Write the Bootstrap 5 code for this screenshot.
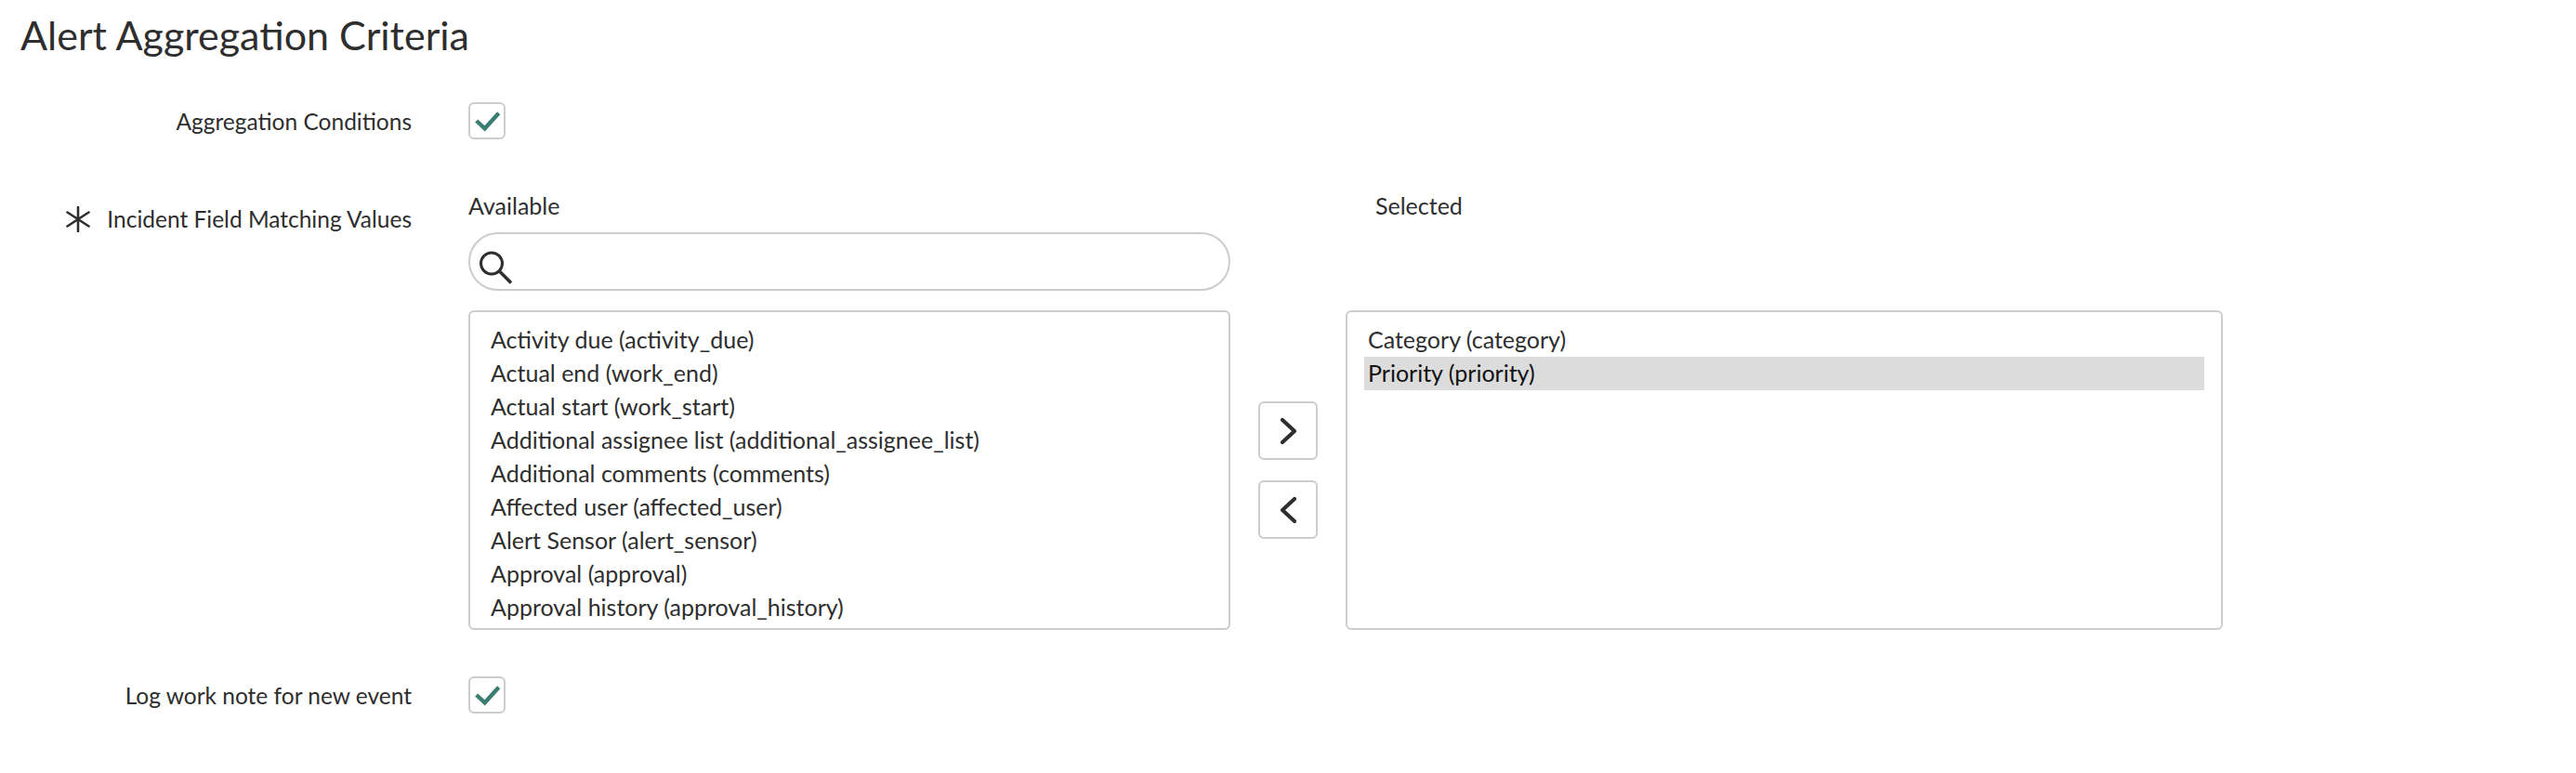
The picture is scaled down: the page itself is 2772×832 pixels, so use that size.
<!DOCTYPE html>
<html lang="en">
<head>
<meta charset="utf-8">
<title>Alert Aggregation Criteria</title>
<link href="https://cdn.jsdelivr.net/npm/bootstrap@5.3.0/dist/css/bootstrap.min.css" rel="stylesheet">
<style>
body { background:#fff; color:#2e2e2e; font-family:"Lato","Noto Sans",sans-serif; font-size:25px; line-height:36px; }
.ttl { font-family:inherit; font-size:43px; font-weight:400; line-height:56px; padding:10px 0 44px 22px; margin:0; color:#2e2e2e; }
.lab-col { width:443px; margin-right:61px; flex:none; font-size:24.500px; }
.lab-one { padding-top:2px; }
.cbx { width:40px; height:40px; border:2px solid #ccc; border-radius:6px; background:#fff; }
.cbx svg { width:36px; height:36px; display:block; }
.row-two { margin-top:54px; }
.lab-two { padding-top:14px; gap:18px; }
.pick-grid { grid-template-columns:820px 124px 944px; }
.slush-label { height:36px; line-height:34px; }
.sel-label { padding-left:32px; }
.srch { height:63px; margin-top:10px; margin-bottom:21px; border:2px solid #ccc; border-radius:32px; padding-left:10px; }
.lbox { height:344px; border:2px solid #ccc; border-radius:6px; padding:12px 18px 0 18px; }
.lbox-item { height:36px; line-height:34px; padding-left:4px; white-space:nowrap; }
.lbox-on { background:#dcdcdc; color:#111; }
.mover-stack { gap:22px; }
.mover { width:64px; height:63px; padding:0; border:2px solid #ccc; border-radius:6px; background:#fff; overflow:hidden; }
.mover svg { width:60px; height:60px; display:block; }
.row-three { margin-top:50px; }
</style>
</head>
<body>
<h1 class="ttl">Alert Aggregation Criteria</h1>

<div class="d-flex align-items-center">
  <div class="lab-col lab-one text-end">Aggregation Conditions</div>
  <div class="cbx"><svg viewBox="0 0 36 36" fill="none"><path d="M6.700 18 15.700 26.300 30.700 9.700" stroke="#3a7d71" stroke-width="4.400"/></svg></div>
</div>

<div class="d-flex row-two">
  <div class="lab-col lab-two d-flex justify-content-end align-items-start">
    <svg width="26" height="28" viewBox="0 0 26 28" class="mt-1 flex-shrink-0" fill="none" stroke="#2e2e2e" stroke-width="2.600" stroke-linecap="round"><path d="M13 1V27M1.500 6.500 24.500 21.500M24.500 6.500 1.500 21.500"/></svg>
    <span>Incident Field Matching Values</span>
  </div>
  <div class="d-grid pick-grid">
    <div>
      <div class="slush-label">Available</div>
      <div class="srch d-flex align-items-center bg-white">
        <svg width="40" height="50" viewBox="0 0 40 50" fill="none" stroke="#2e2e2e" stroke-width="3"><circle cx="13" cy="26.500" r="11.500"/><path d="M22 35.500 34 47.500" stroke-width="3.500"/></svg>
      </div>
    </div>
    <div></div>
    <div class="slush-label sel-label">Selected</div>

    <div class="lbox">
      <div class="lbox-item">Activity due (activity_due)</div>
      <div class="lbox-item">Actual end (work_end)</div>
      <div class="lbox-item">Actual start (work_start)</div>
      <div class="lbox-item">Additional assignee list (additional_assignee_list)</div>
      <div class="lbox-item">Additional comments (comments)</div>
      <div class="lbox-item">Affected user (affected_user)</div>
      <div class="lbox-item">Alert Sensor (alert_sensor)</div>
      <div class="lbox-item">Approval (approval)</div>
      <div class="lbox-item">Approval history (approval_history)</div>
    </div>
    <div class="d-flex flex-column justify-content-center align-items-center mover-stack">
      <button type="button" class="btn mover" aria-label="Add"><svg viewBox="0 0 60 60" fill="none"><path d="M24 18 37 30 24 42" stroke="#2e2e2e" stroke-width="4.200" stroke-linecap="round" stroke-linejoin="round"/></svg></button>
      <button type="button" class="btn mover" aria-label="Remove"><svg viewBox="0 0 60 60" fill="none"><path d="M37 18 24 30 37 42" stroke="#2e2e2e" stroke-width="4.200" stroke-linecap="round" stroke-linejoin="round"/></svg></button>
    </div>
    <div class="lbox">
      <div class="lbox-item">Category (category)</div>
      <div class="lbox-item lbox-on">Priority (priority)</div>
    </div>
  </div>
</div>

<div class="d-flex align-items-center row-three">
  <div class="lab-col lab-one text-end">Log work note for new event</div>
  <div class="cbx"><svg viewBox="0 0 36 36" fill="none"><path d="M6.700 18 15.700 26.300 30.700 9.700" stroke="#3a7d71" stroke-width="4.400"/></svg></div>
</div>

<script src="https://cdn.jsdelivr.net/npm/bootstrap@5.3.0/dist/js/bootstrap.bundle.min.js"></script>
</body>
</html>
